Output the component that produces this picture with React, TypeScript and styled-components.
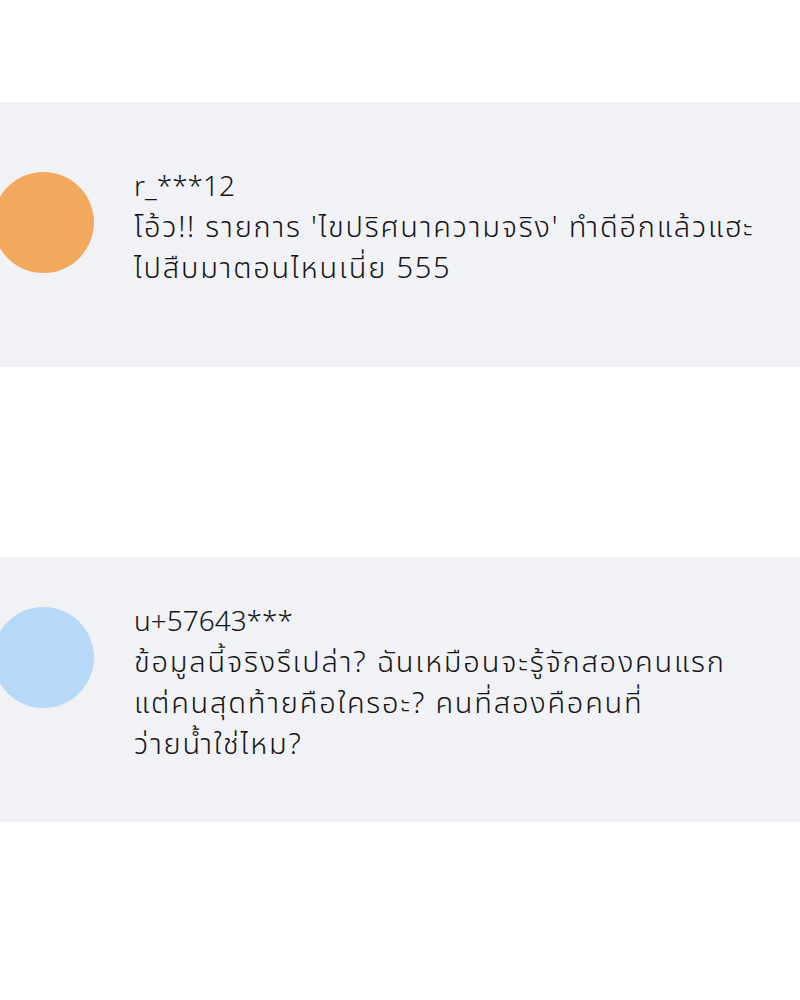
import React from 'react';
import styled, { createGlobalStyle } from 'styled-components';

const comments = [
    {
        user: 'r_***12',
        color: '#f2a95e',
        lines: ["โอ้ว!! รายการ 'ไขปริศนาความจริง' ทำดีอีกแล้วแฮะ", 'ไปสืบมาตอนไหนเนี่ย 555'],
    },
    {
        user: 'u+57643***',
        color: '#b7d8f7',
        lines: [
            'ข้อมูลนี้จริงรึเปล่า? ฉันเหมือนจะรู้จักสองคนแรก',
            'แต่คนสุดท้ายคือใครอะ? คนที่สองคือคนที่',
            'ว่ายน้ำใช่ไหม?',
        ],
    },
];

const App: React.FC = () => (
    <>
        <GlobalStyle />
        <Page>
            {comments.map(c => (
                <Card key={c.user}>
                    <Row>
                        <Avatar color={c.color} />
                        <Body>
                            <UserName>{c.user}</UserName>
                            {c.lines.map(l => (
                                <Line key={l}>{l}</Line>
                            ))}
                        </Body>
                    </Row>
                </Card>
            ))}
        </Page>
    </>
);

export default App;

const GlobalStyle = createGlobalStyle`
    body {
        margin: 0;
        background: #ffffff;
        font-family: "Noto Sans Thai", "Noto Sans", "Liberation Sans", sans-serif;
        color: #141414;
    }
`;

const Page = styled.div`
    display: flex;
    flex-direction: column;
    gap: 190px;
    padding-top: 102px;
    height: 1000px;
    box-sizing: border-box;
    overflow: hidden;
`;

const Card = styled.div`
    height: 265px;
    background: #f1f2f6;
    display: flex;
    align-items: center;
    padding-bottom: 12px;
    box-sizing: border-box;
`;

const Row = styled.div`
    display: flex;
    align-items: flex-start;
    gap: 40px;
    margin-left: -7px;
`;

const Avatar = styled.div<{ color: string }>`
    flex: none;
    width: 101px;
    height: 101px;
    margin-top: 5px;
    border-radius: 50%;
    background: ${({ color }) => color};
`;

const Body = styled.div`
    display: flex;
    flex-direction: column;
`;

const Line = styled.div`
    font-size: 29px;
    font-weight: 300;
    letter-spacing: 1.8px;
    line-height: 41px;
    white-space: nowrap;
`;

const UserName = styled(Line)`
    font-size: 28px;
    letter-spacing: 0;
`;
